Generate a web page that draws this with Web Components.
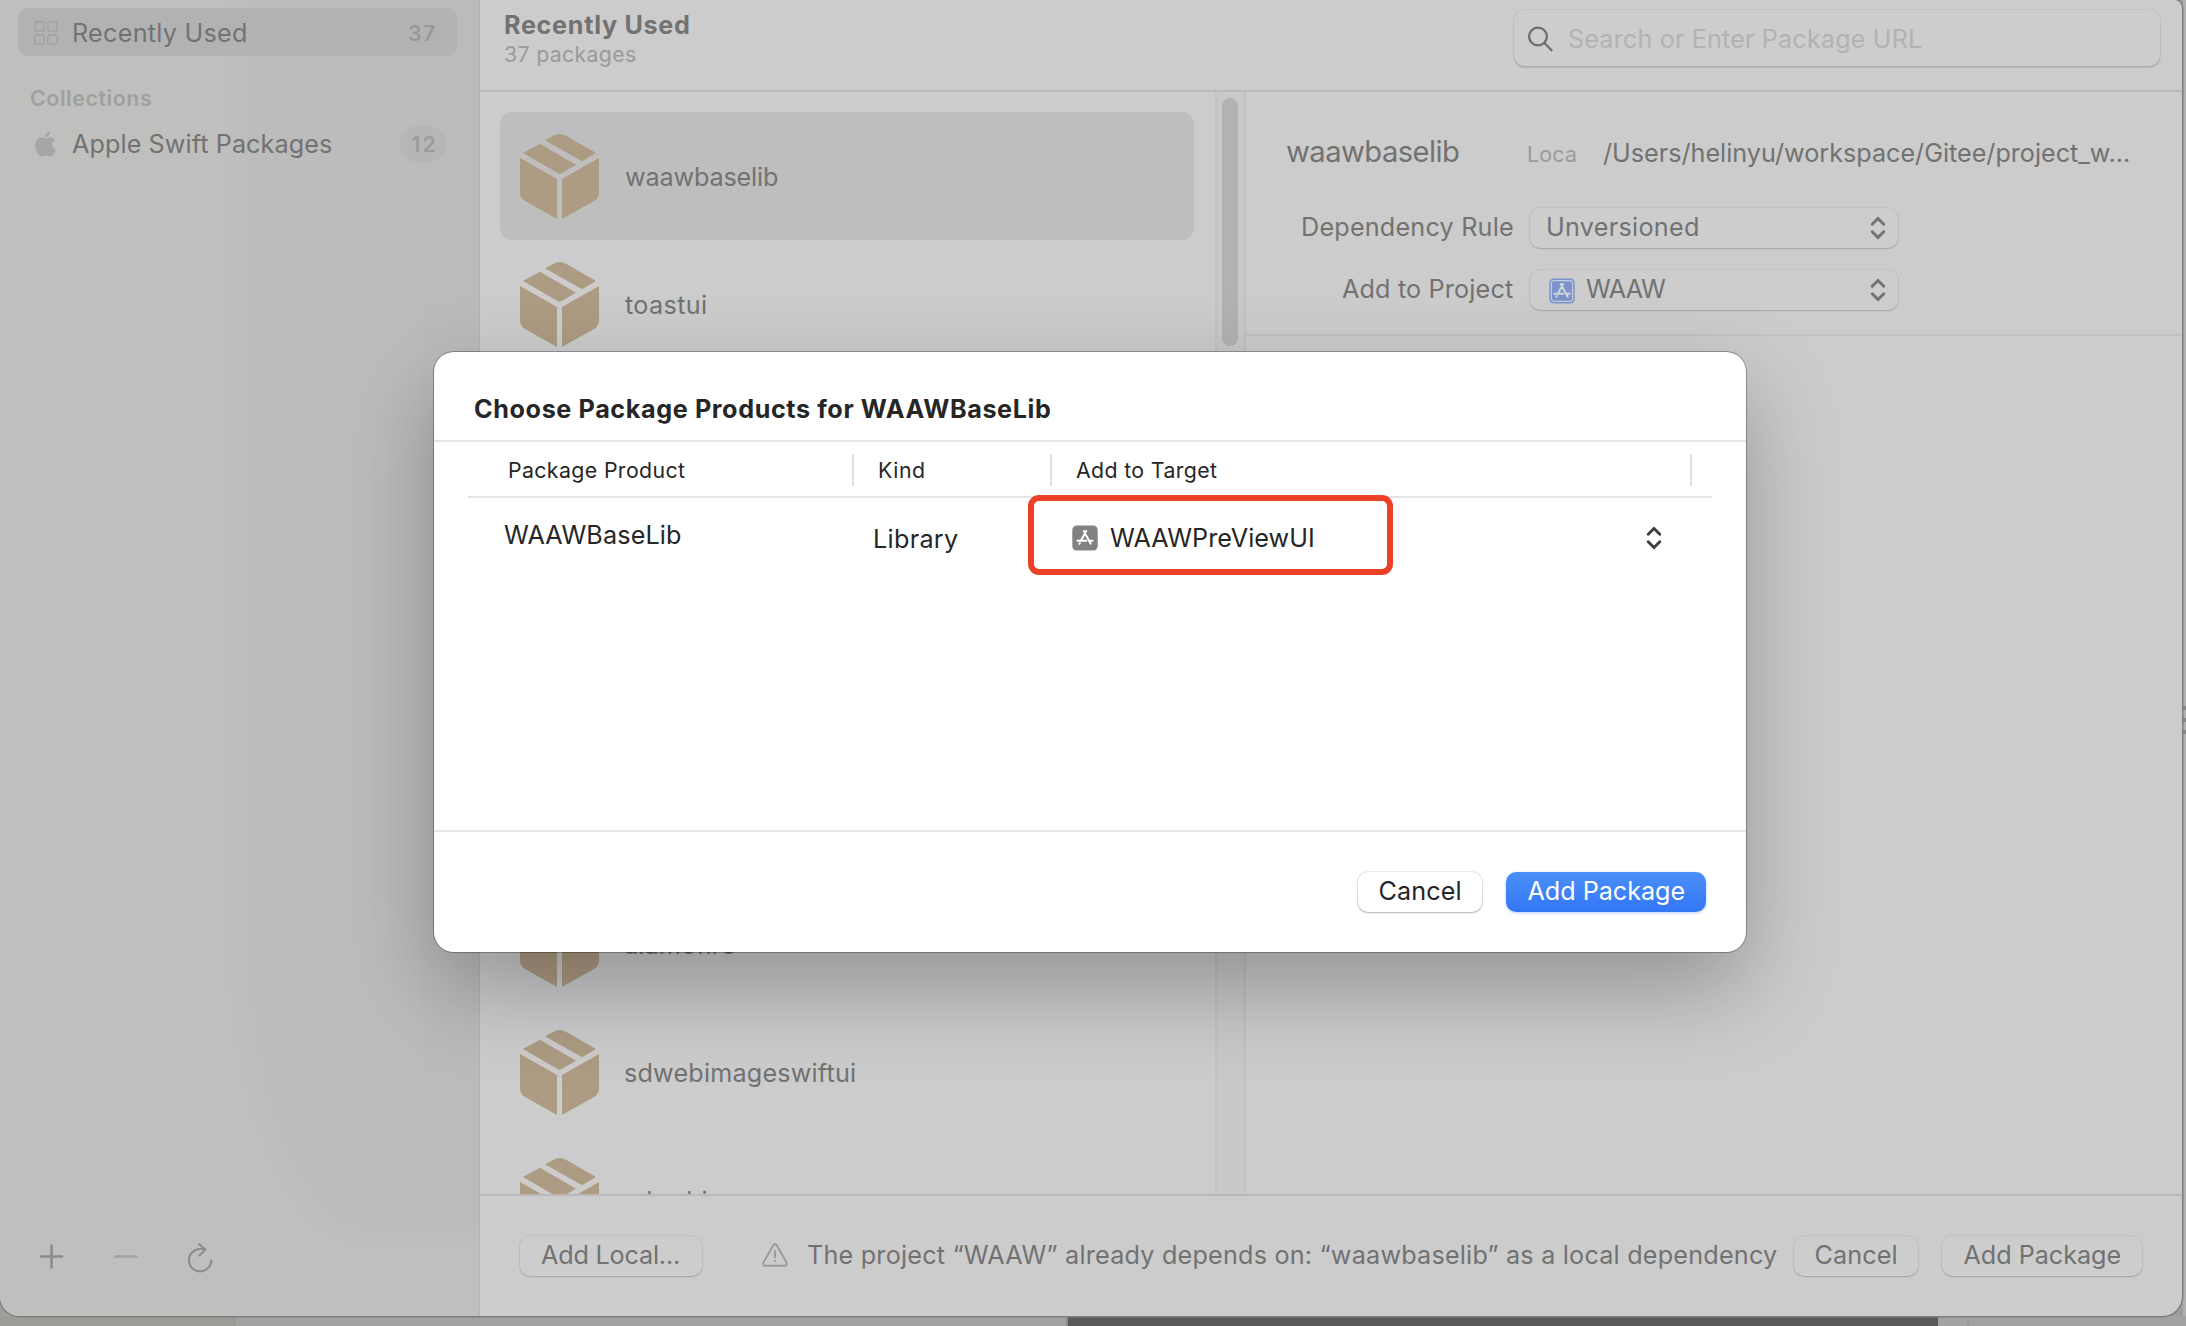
<!DOCTYPE html>
<html lang="en">
<head>
<meta charset="utf-8">
<title>Package Manager</title>
<style>
  html, body { margin: 0; width: 2186px; height: 1326px; overflow: hidden; }
  body { font-family: Inter, "Liberation Sans", sans-serif; color: #727272; background: #9d9d9b; }
</style>
</head>
<body>
<app-desktop></app-desktop>
<script>
const define = (name, html, init) => customElements.define(name, class extends HTMLElement {
  connectedCallback() {
    if (this.shadowRoot) return;
    const root = this.attachShadow({ mode: 'open' });
    const t = document.createElement('template');
    t.innerHTML = typeof html === 'function' ? html(this) : html;
    root.append(t.content.cloneNode(true));
    if (init) init(this, root);
  }
});

/* One line of text whose tracking is set so that its ink fills the width "w". */
const ctx = document.createElement('canvas').getContext('2d');
define('fit-text', el => {
  const size = +(el.getAttribute('size') || 25.2), weight = el.getAttribute('weight') || 400;
  const text = el.getAttribute('text'), w = +el.getAttribute('w');
  ctx.font = `${weight} ${size}px Inter, "Liberation Sans", sans-serif`;
  const m = ctx.measureText(text);
  const ink = m.actualBoundingBoxRight + m.actualBoundingBoxLeft;
  const ls = (w - ink) / Math.max(1, text.length - 1);
  return `<style>
    :host { display: block; flex: none; width: ${w}px; white-space: nowrap; }
    span { display: block; width: max-content; font-size: ${size}px; font-weight: ${weight}; line-height: 32px;
           letter-spacing: ${ls.toFixed(3)}px; margin-left: ${m.actualBoundingBoxLeft.toFixed(2)}px; }
  </style><span>${text}</span>`;
});

define('box-icon', `<style>:host{display:block;flex:none;width:79px;height:85px}svg{display:block}</style>
<svg width="79" height="85" viewBox="0 0 237 255" fill="#ad9b83">
<path d="M75 19 100 5Q119-5 138 5L228 57 186 82Z"/><path d="M60 29 168 92 119 121 9 57Z"/>
<path d="M0 72 111 135V255L14 200Q0 191 0 176Z"/><path d="M237 72 126 135V255L223 200Q237 191 237 176Z"/></svg>`);

define('updown-icon', el => `<style>:host{display:block;flex:none;width:16px;height:24px}svg{display:block}</style>
<svg width="16" height="24" viewBox="0 0 16 24" fill="none" stroke="${el.getAttribute('color') || '#727272'}" stroke-width="2.9" stroke-linecap="round" stroke-linejoin="round"><path d="M2.2 8.3 8 2.4 13.8 8.3M2.2 15.7 8 21.6 13.8 15.7"/></svg>`);

define('app-icon', el => {
  const blue = el.hasAttribute('blue');
  return `<style>:host{display:block;flex:none;width:26px;height:26px}svg{display:block}</style>
<svg width="26" height="26" viewBox="0 0 26 26"><rect x=".3" y=".5" width="25.4" height="25" rx="4.6" fill="${blue ? '#7c94cb' : '#828282'}"/>
${blue ? '<rect x="2.4" y="2.6" width="21.2" height="20.8" rx="2.8" fill="none" stroke="#c3cbdc" stroke-width="1.2"/>' : ''}
<g fill="none" stroke="${blue ? '#d3d6dd' : '#fff'}" stroke-width="2" stroke-linecap="round"><path d="M11.8 6 18.6 18.6M14.2 6 9.3 14.9M5.4 15.7H14.2M17.8 15.7H20.6M7.9 18 7.4 18.8"/></g></svg>`;
});

define('push-button', `<style>
:host{display:flex;flex:none;height:40px;box-sizing:border-box;border-radius:10px;align-items:center;justify-content:center;padding-bottom:2px;
background:#cdcdcd;box-shadow:0 0 0 1px rgba(0,0,0,.04),0 1px 1.5px rgba(0,0,0,.16)}
:host([kind=light]){background:#fff;box-shadow:0 0 0 1px rgba(0,0,0,.07),0 1px 2px rgba(0,0,0,.26);color:#262626}
:host([kind=primary]){background:linear-gradient(#4b8ff8,#3276f6);box-shadow:0 1px 3px rgba(50,118,246,.35);color:#fff}
</style><slot></slot>`);

define('popup-button', `<style>
:host{display:flex;flex:none;width:368px;height:40px;box-sizing:border-box;border-radius:10px;align-items:center;padding:0 12px 0 18px;
background:#cdcdcd;box-shadow:0 0 0 1px rgba(0,0,0,.04),0 1px 1.5px rgba(0,0,0,.16)}
div{display:flex;align-items:center;gap:11px;flex:1;padding-bottom:2px}
</style><div><slot></slot></div><updown-icon></updown-icon>`);

define('side-bar', `<style>
:host{display:flex;flex-direction:column;flex:none;width:480px;height:1316px;box-sizing:border-box;padding:8px 22px 0 18px;border-right:1px solid #b3b3b3;
position:relative;z-index:0;overflow:hidden;background:#bfbfbd}
:host::before{content:"";position:absolute;z-index:-1;left:238px;top:-20px;right:-20px;bottom:82px;border-bottom-left-radius:130px 330px;
background:linear-gradient(90deg,#bcbcbc,#bbbbbb);filter:blur(7px)}
.row{display:flex;align-items:center;height:48px;box-sizing:border-box;flex:none}
.sel{background:#b2b2b2;border-radius:10px;padding:1px 22px 0 16px}
.grow{flex:1}
.g{margin-right:16px}
.num{color:#989898}
.head{color:#a0a0a0;margin:26px 0 0 13px}
.item{margin-top:6px;padding:0 11px 0 17px}
.pill{display:flex;justify-content:center;align-items:center;width:46px;height:36px;border-radius:18px;background:#b6b6b6;color:#9b9b9b}
.tools{display:flex;gap:50px;margin:auto 0 41px 21px;align-items:flex-start;height:32px}
svg{display:block;flex:none}
</style>
<div class="row sel"><svg class="g" width="24" height="24" fill="none" stroke="#a6a6a6" stroke-width="1.8"><rect x="1" y="1" width="9" height="9" rx="1.5"/><rect x="14" y="1" width="9" height="9" rx="1.5"/><rect x="1" y="14" width="9" height="9" rx="1.5"/><rect x="14" y="14" width="9" height="9" rx="1.5"/></svg>
<fit-text text="Recently Used" w="172"></fit-text><span class="grow"></span><fit-text class="num" text="37" w="26" size="21.3" weight="600"></fit-text></div>
<fit-text class="head" text="Collections" w="120" size="21.3" weight="600"></fit-text>
<div class="row item"><svg style="margin-right:16px" width="21" height="26" viewBox="0 0 21 26" fill="#a6a6a6"><path d="M10.6 7.6C12 7.6 13.4 6.6 15.5 6.6 17.4 6.6 19 7.5 20 9 15.8 11.4 16.4 17.2 20.8 18.9 19.9 21.5 17.6 25.4 15.3 25.4 13.6 25.4 12.9 24.4 10.9 24.4 9 24.4 8.1 25.4 6.6 25.4 3.6 25.4.2 19.8.2 14.5.2 9.5 3.2 6.6 6.3 6.6 8.1 6.6 9.5 7.6 10.6 7.6Z"/><path d="M10.3 6.2C10.1 3.3 12.4.7 15 .4 15.3 3.2 12.9 6.1 10.3 6.2Z"/></svg>
<fit-text text="Apple Swift Packages" w="260"></fit-text><span class="grow"></span><span class="pill"><fit-text text="12" w="23" size="21.3" weight="600"></fit-text></span></div>
<div class="tools">
<svg width="25" height="26" stroke="#8c8c8c" stroke-width="2.6" stroke-linecap="round"><path d="M2 13.5H23M12.5 2.5V24.5"/></svg>
<svg width="24" height="26" stroke="#a1a1a1" stroke-width="2.6" stroke-linecap="round"><path d="M1 13.5H22"/></svg>
<svg width="26" height="32" fill="none" stroke="#8c8c8c" stroke-width="2.1" stroke-linecap="round" stroke-linejoin="round"><path d="M23.3 17.2A11.2 11.2 0 1 1 12.1 6H17M11.3 1.2 17.3 6.8 11.3 12.5"/></svg>
</div>`);

define('search-field', `<style>
:host{display:flex;flex:none;align-items:center;gap:16px;width:646px;height:56px;box-sizing:border-box;padding:1px 14px 0;border-radius:11px;background:#cdcdcd;
box-shadow:0 0 0 1px rgba(0,0,0,.045),0 1.5px 1.5px rgba(0,0,0,.12);color:#b2b2b2}svg{display:block}
</style><svg width="25" height="26" fill="none" stroke="#6e6e6e" stroke-width="2.3" stroke-linecap="round"><circle cx="10" cy="10.5" r="8.9"/><path d="M16.5 17 23.5 24.3"/></svg>
<fit-text text="Search or Enter Package URL" w="353"></fit-text>`);

define('top-bar', `<style>
:host{display:flex;flex:none;height:92px;box-sizing:border-box;border-bottom:2px solid #b9b9b9;padding:10px 22px 0 25px;justify-content:space-between;align-items:flex-start}
.t{margin-top:-1px}.s{color:#9a9a9a;margin-top:-3px}
</style><div><fit-text class="t" text="Recently Used" w="184" weight="700"></fit-text><fit-text class="s" text="37 packages" w="131" size="21.3"></fit-text></div><search-field></search-field>`);

define('package-row', el => `<style>
:host{display:flex;flex:none;align-items:center;gap:26px;width:694px;height:128px;box-sizing:border-box;padding-left:20px;border-radius:12px}
:host([selected]){background:#bebebe}
fit-text{padding-top:1px}
</style><box-icon></box-icon><fit-text text="${el.getAttribute('name')}" w="${el.getAttribute('w')}"></fit-text>`);

define('package-list', `<style>
:host{display:flex;flex:none;width:735px;height:1102px;flex-direction:column;overflow:hidden;box-sizing:border-box;padding:20px 0 0 20px}
.covered{flex:none;height:512px}
</style><package-row selected name="waawbaselib" w="153"></package-row><package-row name="toastui" w="81"></package-row>
<div class="covered"></div>
<package-row name="alamofire" w="110"></package-row><package-row name="sdwebimageswiftui" w="230"></package-row><package-row name="sdwebimage" w="147"></package-row>`);

define('scroll-track', `<style>
:host{display:block;flex:none;width:31px;height:1102px;box-sizing:border-box;border-left:2px solid #c2c2c2;border-right:2px solid #c1c1c1;padding:6px 0 0 5px;background:#c9c9c9}
div{width:16px;height:248px;border-radius:8px;background:#b2b2b2}
</style><div></div>`);

define('package-detail', `<style>
:host{display:flex;flex:1;flex-direction:column;height:1102px}
.box{height:244px;box-sizing:border-box;border-bottom:2px solid #c1c1c1;display:flex;flex-direction:column;flex:none}
.name{display:flex;height:32px;margin:44px 0 0 40px;align-items:flex-end}
.name .loca{color:#9b9b9b;margin:0 27px 0 69px;position:relative;top:2px}
.name .path{position:relative;top:1px}
.f{display:flex;align-items:center;height:40px;gap:17px}
.l{width:267px;display:flex;justify-content:flex-end;padding-bottom:2px}
</style><div class="box"><div class="name"><fit-text text="waawbaselib" w="173" size="29.2"></fit-text><fit-text class="loca" text="Loca" w="48" size="21.3"></fit-text><fit-text class="path" text="/Users/helinyu/workspace/Gitee/project_w..." w="526"></fit-text></div>
<div class="f" style="margin-top:40px"><span class="l"><fit-text text="Dependency Rule" w="210"></fit-text></span><popup-button><fit-text text="Unversioned" w="150"></fit-text></popup-button></div>
<div class="f" style="margin-top:22px"><span class="l"><fit-text text="Add to Project" w="171"></fit-text></span><popup-button><app-icon blue style="margin-left:1px;position:relative;top:2px"></app-icon><fit-text text="WAAW" w="80"></fit-text></popup-button></div></div>`);

define('bottom-bar', `<style>
:host{display:flex;flex:none;height:122px;box-sizing:border-box;border-top:2px solid #b9b9b9;padding:40px 40px 0 40px;align-items:flex-start}
.msg{display:flex;align-items:center;height:40px;box-sizing:border-box;padding-bottom:2px;gap:20px;margin:0 17px 0 60px}
svg{display:block;flex:none}
</style><push-button style="width:182px;padding-right:2px"><fit-text text="Add Local..." w="138"></fit-text></push-button>
<div class="msg"><svg width="26" height="24" fill="none" stroke="#9a9a9a" stroke-width="1.9" stroke-linecap="round" stroke-linejoin="round"><path d="M11.3 2.2Q13 .2 14.7 2.2L24.6 19.6Q25.2 22.6 22.6 22.8H3.4Q.8 22.6 1.4 19.6Z"/><path d="M13 8V14.5M13 18V18.4"/></svg>
<fit-text text="The project “WAAW” already depends on: “waawbaselib” as a local dependency" w="969"></fit-text></div>
<push-button style="width:124px"><fit-text text="Cancel" w="81"></fit-text></push-button>
<push-button style="width:200px;margin-left:24px"><fit-text text="Add Package" w="157"></fit-text></push-button>`);

define('product-sheet', `<style>
:host{display:flex;flex-direction:column;width:1312px;height:600px;border-radius:20px;background:#fff;color:#262626;
box-shadow:0 0 0 1px rgba(0,0,0,.28),0 36px 90px rgba(0,0,0,.28)}
.title{height:90px;box-sizing:border-box;padding:41px 0 0 41px;border-bottom:2px solid #e4e4e4;flex:none}
.heads{display:flex;align-items:center;height:56px;box-sizing:border-box;margin:0 34px;border-bottom:2px solid #e4e4e4;padding:2px 0 0 0;flex:none}
.c{display:flex;height:32px;box-sizing:border-box;border-right:2px solid #e2e2e2;align-items:center}
.row{display:flex;align-items:flex-start;flex:1;padding-left:70px}
.mark{display:flex;align-items:center;gap:12px;box-sizing:border-box;width:365px;height:80px;border:6px solid #ec4126;border-radius:11px;margin:-3px 0 0 70px;padding:5px 0 0 38px;position:relative}
.foot{display:flex;justify-content:flex-end;gap:24px;height:122px;box-sizing:border-box;border-top:2px solid #e4e4e4;padding:40px 40px 0 0;flex:none}
</style>
<div class="title"><fit-text text="Choose Package Products for WAAWBaseLib" w="575" weight="700"></fit-text></div>
<div class="heads"><span class="c" style="width:386px;padding-left:41px"><fit-text text="Package Product" w="176" size="21.3"></fit-text></span><span class="c" style="width:198px;padding-left:25px"><fit-text text="Kind" w="45" size="21.3"></fit-text></span><span class="c" style="width:640px;padding-left:24px"><fit-text text="Add to Target" w="141" size="21.3"></fit-text></span></div>
<div class="row"><fit-text style="margin-top:21px" text="WAAWBaseLib" w="177"></fit-text><fit-text style="margin:25px 0 0 194px" text="Library" w="83"></fit-text>
<div class="mark"><app-icon></app-icon><fit-text text="WAAWPreViewUI" w="203"></fit-text></div><updown-icon color="#3f3f3f" style="margin:28px 0 0 253px"></updown-icon></div>
<div class="foot"><push-button kind="light" style="width:124px"><fit-text text="Cancel" w="81"></fit-text></push-button><push-button kind="primary" style="width:200px"><fit-text text="Add Package" w="157"></fit-text></push-button></div>`);

define('package-window', `<style>
:host{display:flex;flex:none;position:relative;width:2182px;height:1316px;border-radius:0 8px 20px 20px;box-shadow:0 0 0 1.5px #7e7e7e;background:#cccccc}
side-bar{border-bottom-left-radius:20px}
.main{flex:1;display:flex;flex-direction:column}
.mid{display:flex;height:1102px}
.clip{position:absolute;inset:0;overflow:hidden;border-radius:0 8px 20px 20px}
product-sheet{position:absolute;left:434px;top:352px}
</style><side-bar></side-bar><div class="main"><top-bar></top-bar><div class="mid"><package-list></package-list><scroll-track></scroll-track><package-detail></package-detail></div><bottom-bar></bottom-bar></div>
<div class="clip"><product-sheet></product-sheet></div>`);

define('app-desktop', `<style>
:host{display:flex;flex-direction:column;width:2186px;height:1326px;overflow:hidden}
.top{display:flex;height:1316px}
.edge{flex:1;margin-left:1px;background:#b0b0b0;display:flex;flex-direction:column;gap:8px;padding-top:706px}
.edge i{display:block;height:4px;background:#868686}
.strip{display:flex;height:10px;background:#a3a3a3}
.strip span{flex:none;box-sizing:border-box}
</style><div class="top"><package-window></package-window><div class="edge"><i></i><i></i><i></i></div></div>
<div class="strip"><span style="width:236px;background:#9b9b98"></span><span style="width:832px;background:#a2a2a2;border-right:2px solid #8c8c8c"></span><span style="width:870px;background:#5a5a5b"></span><span style="width:31px;border-right:2px solid #989898"></span><span style="width:217px;background:#a2a2a0"></span></div>`);
</script>
</body>
</html>
